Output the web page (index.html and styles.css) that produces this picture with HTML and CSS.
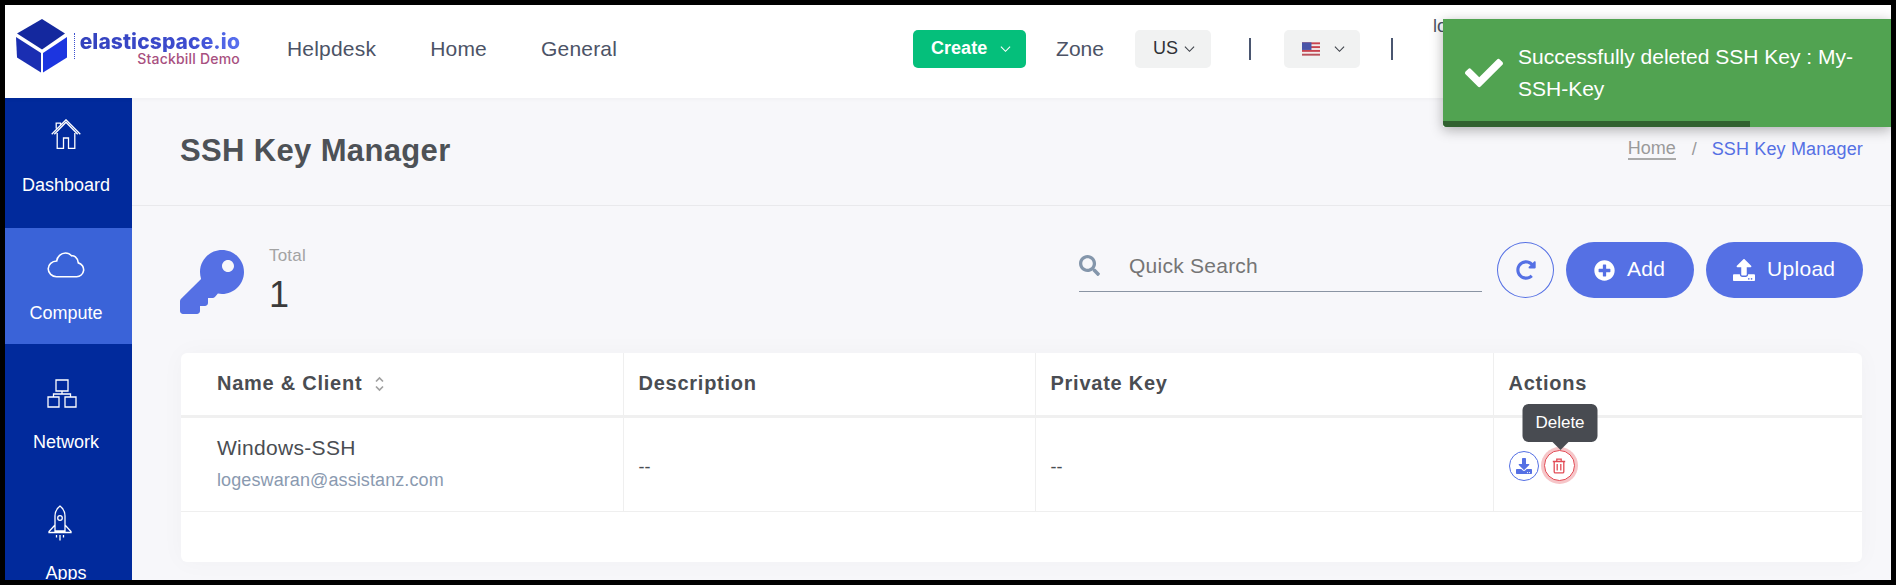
FILE: index.html
```html
<!DOCTYPE html>
<html lang="en">
<head>
<meta charset="utf-8">
<title>SSH Key Manager</title>
<link rel="stylesheet" href="styles.css">
</head>
<body>
<div class="frame">
  <header class="topbar">
    <a class="logo">
      <svg class="logo-cube" viewBox="0 0 52 54" aria-hidden="true">
        <polygon points="26,0 49,14.500 26,30.500 1,14.500" fill="#14289e"/>
        <polygon points="0,18 25,34 25,53.500 1,38.500" fill="#1a2eb2"/>
        <polygon points="27,34 51,18 51,38.500 27,53.500" fill="#1c35e0"/>
      </svg>
      <span class="logo-rule"></span>
      <span class="logo-text">
        <span class="logo-name">elasticspace.io</span>
        <span class="logo-sub">Stackbill Demo</span>
      </span>
    </a>
    <nav class="topnav">
      <a>Helpdesk</a>
      <a>Home</a>
      <a>General</a>
    </nav>
    <div class="topright">
      <button class="create">Create
        <svg class="chev chev-w" viewBox="0 0 12 8"><polyline points="1,1.500 6,6.500 11,1.500"/></svg>
      </button>
      <span class="zone">Zone</span>
      <div class="pick pick-us">US
        <svg class="chev" viewBox="0 0 12 8"><polyline points="1,1.500 6,6.500 11,1.500"/></svg>
      </div>
      <span class="vr vr-a"></span>
      <div class="pick pick-flag">
        <svg class="flag" viewBox="0 0 19 14" aria-hidden="true">
          <rect width="19" height="14" fill="#f3eaea"/>
          <rect y="0" width="19" height="2" fill="#c8434f"/>
          <rect y="4" width="19" height="2" fill="#c8434f"/>
          <rect y="8" width="19" height="2" fill="#c8434f"/>
          <rect y="12" width="19" height="2" fill="#b8535c"/>
          <rect width="10" height="8" fill="#4a55a8"/>
        </svg>
        <svg class="chev" viewBox="0 0 12 8"><polyline points="1,1.500 6,6.500 11,1.500"/></svg>
      </div>
      <span class="vr vr-b"></span>
      <span class="user">logeswaran@assistanz.com</span>
    </div>
  </header>

  <div class="body">
    <aside class="side">
      <a class="side-item item-dash">
        <svg class="ico-home" viewBox="0 0 30 30" aria-hidden="true">
          <path d="M.7 15.300 15 .8l14.300 14.500M3.300 15.200 15 3.300l11.700 11.900M6.200 14v15.300h6.300V19h5v10.300h6.300V14M5.200 9.500V4.200h4.300v1.300"/>
        </svg>
        <span>Dashboard</span>
      </a>
      <a class="side-item item-comp active">
        <svg class="ico-cloud" viewBox="0 0 38 26" aria-hidden="true">
          <path d="M9.500 24.700h20a7 7 0 0 0 1.800-13.800C30.600 5 26.500 3.300 24.500 3.800 22.800 1.800 20.500 1 18.500 1 14 1 10.200 4.500 9.700 9 5 9.200 1.200 12.300 1.200 16.800c0 4.400 3.800 7.900 8.300 7.900z"/>
        </svg>
        <span>Compute</span>
      </a>
      <a class="side-item item-net">
        <svg class="ico-net" viewBox="0 0 30 29" aria-hidden="true">
          <path d="M9 1h12v11H9zM1 18h11v10H1zM18 18h11v10H18zM15 12v3M6.500 18v-3h17v3"/>
        </svg>
        <span>Network</span>
      </a>
      <a class="side-item item-apps">
        <svg class="ico-rocket" viewBox="0 0 24 36" aria-hidden="true">
          <path d="M12 1c-3.800 3-5 6.500-5 10v15h10V11c0-3.500-1.200-7-5-10zM7 20l-6 6.500v1h22v-1L17 20"/>
          <circle cx="12" cy="13" r="2.300"/>
          <path d="M8.500 30v2.500M12 30v5.500M15.500 30v2.500"/>
        </svg>
        <span>Apps</span>
      </a>
    </aside>

    <main class="main">
      <div class="pagehead">
        <h1>SSH Key Manager</h1>
        <div class="crumbs">
          <a class="crumb-home">Home</a>
          <span class="crumb-sep">/</span>
          <span class="crumb-now">SSH Key Manager</span>
        </div>
      </div>

      <div class="content">
        <div class="toolbar">
          <svg class="bigkey" viewBox="0 0 512 512" aria-hidden="true">
            <path d="M512 176.001C512 273.203 433.202 352 336 352c-11.220 0-22.190-1.062-32.827-3.069l-24.012 27.014A23.999 23.999 0 0 1 261.223 384H224v40c0 13.255-10.745 24-24 24h-40v40c0 13.255-10.745 24-24 24H24c-13.255 0-24-10.745-24-24v-78.059c0-6.365 2.529-12.470 7.029-16.971l161.802-161.802C163.108 213.814 160 195.271 160 176 160 78.798 238.797.001 335.999 0 433.488-.001 512 78.511 512 176.001zM336 128c0 26.510 21.490 48 48 48s48-21.490 48-48-21.490-48-48-48-48 21.490-48 48z"/>
          </svg>
          <div class="stat">
            <div class="stat-label">Total</div>
            <div class="stat-value">1</div>
          </div>
          <label class="search">
            <svg class="search-ico" viewBox="0 0 512 512" aria-hidden="true">
              <path d="M505 442.700L405.300 343c-4.500-4.500-10.600-7-17-7H372c27.600-35.300 44-79.700 44-128C416 93.100 322.900 0 208 0S0 93.100 0 208s93.100 208 208 208c48.300 0 92.700-16.400 128-44v16.300c0 6.400 2.500 12.500 7 17l99.700 99.700c9.400 9.400 24.600 9.400 33.900 0l28.300-28.300c9.400-9.400 9.400-24.600.1-34zM208 336c-70.700 0-128-57.200-128-128 0-70.700 57.200-128 128-128 70.700 0 128 57.200 128 128 0 70.700-57.200 128-128 128z"/>
            </svg>
            <input class="search-input" type="text" placeholder="Quick Search">
          </label>
          <button class="refresh" aria-label="Refresh">
            <svg viewBox="0 0 512 512" aria-hidden="true">
              <path d="M256.455 8c66.269.119 126.437 26.233 170.859 68.685l35.715-35.715C478.149 25.851 504 36.559 504 57.941V192c0 13.255-10.745 24-24 24H345.941c-21.382 0-32.090-25.851-16.971-40.971l41.750-41.750c-30.864-28.899-70.801-44.907-113.230-45.273-92.398-.798-170.283 73.977-169.484 169.442C88.764 348.009 162.184 424 256 424c41.127 0 79.997-14.678 110.629-41.556 4.743-4.161 11.906-3.908 16.368.553l39.662 39.662c4.872 4.872 4.631 12.815-.482 17.433C378.202 479.813 319.926 504 256 504 119.034 504 8.001 392.967 8 256.002 7.999 119.193 119.646 7.755 256.455 8z"/>
            </svg>
          </button>
          <button class="pill pill-add">
            <svg viewBox="0 0 512 512" aria-hidden="true">
              <path d="M256 8C119 8 8 119 8 256s111 248 248 248 248-111 248-248S393 8 256 8zm144 276c0 6.600-5.400 12-12 12h-92v92c0 6.600-5.400 12-12 12h-56c-6.600 0-12-5.400-12-12v-92h-92c-6.600 0-12-5.400-12-12v-56c0-6.600 5.400-12 12-12h92v-92c0-6.600 5.400-12 12-12h56c6.600 0 12 5.400 12 12v92h92c6.600 0 12 5.400 12 12v56z"/>
            </svg>
            <span class="pill-label">Add</span>
          </button>
          <button class="pill pill-up">
            <svg viewBox="0 0 512 512" aria-hidden="true">
              <path d="M296 384h-80c-13.300 0-24-10.700-24-24V192h-87.700c-17.800 0-26.700-21.500-14.100-34.100L242.300 5.700c7.500-7.500 19.800-7.500 27.300 0l152.200 152.200c12.600 12.600 3.700 34.100-14.100 34.100H320v168c0 13.300-10.700 24-24 24zm216-8v112c0 13.300-10.700 24-24 24H24c-13.300 0-24-10.700-24-24V376c0-13.300 10.700-24 24-24h136v8c0 30.900 25.100 56 56 56h80c30.900 0 56-25.100 56-56v-8h136c13.300 0 24 10.700 24 24zm-124 88c0-11-9-20-20-20s-20 9-20 20 9 20 20 20 20-9 20-20zm64 0c0-11-9-20-20-20s-20 9-20 20 9 20 20 20 20-9 20-20z"/>
            </svg>
            <span class="pill-label">Upload</span>
          </button>
        </div>

        <section class="card">
          <table class="grid">
            <colgroup>
              <col class="c1"><col class="c2"><col class="c3"><col class="c4">
            </colgroup>
            <thead>
              <tr>
                <th class="first">Name &amp; Client
                  <svg class="sort" viewBox="0 0 9 16" aria-hidden="true"><path d="M1 5.500 4.500 2 8 5.500M1 10.500 4.500 14 8 10.500"/></svg>
                </th>
                <th>Description</th>
                <th>Private Key</th>
                <th>Actions</th>
              </tr>
            </thead>
            <tbody>
              <tr>
                <td class="first">
                  <div class="kname">Windows-SSH</div>
                  <div class="kmail">logeswaran@assistanz.com</div>
                </td>
                <td class="dash">--</td>
                <td class="dash">--</td>
                <td>
                  <div class="acts">
                    <button class="act act-dl" aria-label="Download">
                      <svg viewBox="0 0 512 512" aria-hidden="true">
                        <path d="M216 0h80c13.300 0 24 10.700 24 24v168h87.700c17.800 0 26.700 21.500 14.100 34.100L269.700 378.300c-7.500 7.500-19.800 7.500-27.300 0L90.100 226.100c-12.600-12.600-3.700-34.100 14.100-34.100H192V24c0-13.300 10.700-24 24-24zm296 376v112c0 13.300-10.700 24-24 24H24c-13.300 0-24-10.700-24-24V376c0-13.300 10.700-24 24-24h146.700l49 49c20.100 20.100 52.500 20.100 72.600 0l49-49H488c13.300 0 24 10.700 24 24zm-124 88c0-11-9-20-20-20s-20 9-20 20 9 20 20 20 20-9 20-20zm64 0c0-11-9-20-20-20s-20 9-20 20 9 20 20 20 20-9 20-20z"/>
                      </svg>
                    </button>
                    <button class="act act-del" aria-label="Delete">
                      <svg viewBox="0 0 14 16" aria-hidden="true">
                        <path d="M.8 3.500h12.400M4.800 3.500V1.200h4.400v2.300M2.200 3.500v10.200c0 .7.500 1.200 1.200 1.200h7.200c.7 0 1.200-.5 1.200-1.200V3.500M5.200 6v6.500M8.800 6v6.500"/>
                      </svg>
                      <span class="tip">Delete</span>
                    </button>
                  </div>
                </td>
              </tr>
            </tbody>
          </table>
        </section>
      </div>
    </main>
  </div>

  <div class="toast">
    <div class="toast-body">
      <svg class="toast-ico" viewBox="0 0 512 512" aria-hidden="true">
        <path d="M173.898 439.404l-166.400-166.400c-9.997-9.997-9.997-26.206 0-36.204l36.203-36.204c9.997-9.998 26.207-9.998 36.204 0L192 312.690 432.095 72.596c9.997-9.997 26.207-9.997 36.204 0l36.203 36.204c9.997 9.997 9.997 26.206 0 36.204l-294.400 294.401c-9.998 9.997-26.207 9.997-36.204-.001z"/>
      </svg>
      <p class="toast-text">Successfully deleted SSH Key : My-SSH-Key</p>
    </div>
    <div class="toast-bar"></div>
  </div>
</div>
</body>
</html>
```

FILE: styles.css
```css
* { box-sizing: border-box; }
html, body { margin: 0; height: 100%; overflow: hidden; }
body {
  background: #000;
  padding: 5px;
  font-family: "Liberation Sans", Arial, sans-serif;
  color: #4a4d52;
}
button { font-family: inherit; border: 0; padding: 0; cursor: pointer; }
a { color: inherit; text-decoration: none; }

.frame {
  position: relative;
  width: 1886px;
  height: 575px;
  overflow: hidden;
  background: #f7f7fa;
  display: flex;
  flex-direction: column;
}

/* top bar */
.topbar {
  flex: 0 0 93px;
  display: flex;
  align-items: center;
  background: #fff;
  padding-bottom: 6px;
  white-space: nowrap;
  box-shadow: 0 1px 4px rgba(0, 0, 0, .04);
  position: relative;
  z-index: 1;
}
.logo {
  flex: 0 0 127px;
  width: 127px;
  display: flex;
  align-items: center;
  padding: 0 0 6px 11px;
}
.logo-cube { flex: none; width: 52px; height: 54px; }
.logo-rule {
  flex: none;
  height: 26px;
  margin: 0 7px 0 6px;
  border-left: 1.500px dotted #3a4fd0;
}
.logo-text {
  flex: none;
  display: flex;
  flex-direction: column;
  align-items: flex-end;
  width: 158px;
  margin-top: 7px;
}
.logo-name {
  font-family: Inter, sans-serif;
  font-weight: 800;
  font-size: 21px;
  line-height: 20px;
  letter-spacing: .1px;
  color: #3a48c6;
  background: linear-gradient(90deg, #3442bd, #3d4cd0 70%, #5a72f0);
  -webkit-background-clip: text;
  background-clip: text;
  -webkit-text-fill-color: transparent;
}
.logo-sub {
  font-family: Inter, sans-serif;
  font-weight: 500;
  font-size: 14px;
  line-height: 14px;
  letter-spacing: .2px;
  color: #a8507f;
}
.topnav {
  display: flex;
  gap: 54px;
  margin-left: 155px;
  font-size: 21px;
  letter-spacing: .2px;
  color: #4c5366;
}
.topright {
  display: flex;
  align-items: center;
  margin-left: 296px;
}
.create {
  display: flex;
  align-items: center;
  gap: 13px;
  width: 113px;
  height: 38px;
  padding-left: 18px;
  border-radius: 5px;
  background: #05bf7b;
  color: #fff;
  font-size: 18px;
  font-weight: 700;
}
.chev { width: 11px; height: 8px; fill: none; stroke: #3c4048; stroke-width: 1.200; }
.chev-w { stroke: #fff; }
.zone { margin-left: 30px; font-size: 21px; color: #4c5366; }
.pick {
  display: flex;
  align-items: center;
  height: 38px;
  width: 76px;
  border-radius: 5px;
  background: #f1f2f2;
  color: #2f3136;
  font-size: 18px;
}
.pick-us { margin-left: 31px; padding-left: 18px; gap: 6px; }
.pick-flag { margin-left: 33px; padding-left: 18px; gap: 14px; }
.flag { width: 18px; height: 14px; }
.vr { width: 2px; height: 22px; background: #4a5670; }
.vr-a { margin-left: 38px; }
.vr-b { margin-left: 31px; }
.user {
  align-self: flex-start;
  margin: -14px 0 0 40px;
  font-size: 18px;
  line-height: 20px;
  color: #4c5366;
}

/* layout */
.body { flex: 1; display: flex; min-height: 0; }

/* sidebar */
.side {
  flex: 0 0 127px;
  background: #012a9c;
  color: #fff;
  overflow: hidden;
  font-size: 18px;
}
.side-item {
  display: flex;
  flex-direction: column;
  align-items: center;
  line-height: 22px;
  padding-right: 5px;
}
.side-item svg { fill: none; stroke: #fff; stroke-width: 1.300; display: block; }
.item-dash { height: 130px; padding-top: 21px; }
.item-comp { height: 116px; padding-top: 24px; }
.item-net { height: 130px; padding-top: 35px; }
.item-apps { padding-top: 31px; }
.side-item.active { background: #3a63d8; }
.ico-home { width: 30px; height: 30px; margin: 0 1px 25px 0; }
.ico-cloud { width: 38px; height: 26px; margin-bottom: 24px; stroke-width: 1.600 !important; }
.ico-net { width: 30px; height: 29px; margin: 0 8px 23px 0; }
.ico-rocket { width: 24px; height: 36px; margin: 0 12px 21px 0; }

/* main */
.main { flex: 1; min-width: 0; padding-right: 28px; display: flex; flex-direction: column; }
.pagehead {
  flex: 0 0 108px;
  display: flex;
  align-items: center;
  justify-content: space-between;
  margin-right: -28px;
  padding: 0 28px 2px 48px;
  border-bottom: 1.500px solid #e9e9ec;
}
.pagehead h1 { margin: 0; font-size: 31px; font-weight: 700; letter-spacing: .35px; color: #4d5156; }
.crumbs { display: flex; align-items: center; font-size: 18px; margin-bottom: 3px; }
.crumb-home { color: #9a9a9a; border-bottom: 2px solid #aaa; line-height: 20px; }
.crumb-sep { margin: 0 15px 0 16px; color: #9a9a9a; }
.crumb-now { color: #5570e4; letter-spacing: .15px; }

.content { padding-left: 49px; }
.toolbar { display: flex; align-items: flex-start; padding-top: 36px; height: 147px; }
.bigkey { flex: none; width: 64px; height: 64px; margin: 8px 25px 0 -1px; fill: #5570e4; }
.stat-label { margin-top: 4px; font-size: 17px; letter-spacing: .2px; line-height: 20px; color: #a3a3a3; }
.stat-value { margin-top: 7px; font-size: 36px; line-height: 44px; color: #3a3a3a; }
.search {
  display: flex;
  align-items: center;
  width: 403px;
  height: 50px;
  margin-left: auto;
  padding-bottom: 2px;
  border-bottom: 1.500px solid #8a94a3;
}
.search-ico { flex: none; width: 21px; height: 21px; fill: #8496ab; margin-right: 29px; }
.search-input {
  flex: 1;
  min-width: 0;
  border: 0;
  outline: 0;
  background: transparent;
  padding: 0;
  font: 21px "Liberation Sans", Arial, sans-serif;
  letter-spacing: .25px;
  color: #555;
}
.search-input::placeholder { color: #757575; opacity: 1; }
.refresh {
  flex: none;
  display: flex;
  align-items: center;
  justify-content: center;
  width: 57px;
  height: 56px;
  margin-left: 15px;
  border: 1px solid #5570e4;
  border-radius: 50%;
  background: transparent;
}
.refresh svg { width: 20px; height: 20px; fill: #5570e4; }
.pill {
  flex: none;
  display: flex;
  align-items: center;
  height: 56px;
  margin-left: 12px;
  border-radius: 28px;
  background: #5570e4;
  color: #fff;
  font-size: 21px;
}
.pill svg { fill: #fff; }
.pill-label { letter-spacing: .3px; margin-bottom: 2px; }
.pill-add { width: 128px; padding-left: 28px; gap: 12px; }
.pill-add svg { width: 21px; height: 21px; }
.pill-up { width: 157px; padding-left: 27px; gap: 12px; }
.pill-up svg { width: 22px; height: 22px; }

/* table card */
.card {
  height: 209px;
  margin-right: 1px;
  background: #fff;
  border-radius: 6px;
  box-shadow: 0 0 24px rgba(0, 0, 0, .03);
}
.grid { width: 100%; border-collapse: collapse; table-layout: fixed; }
.c1 { width: 442px; }
.c2 { width: 412px; }
.c3 { width: 458px; }
.grid th, .grid td { padding: 0 0 0 15px; text-align: left; border-left: 1px solid #efefef; }
.grid .first { padding-left: 36px; border-left: 0; }
.grid th {
  height: 63px;
  padding-bottom: 1px;
  border-bottom: 3px solid #f0f0f0;
  font-size: 20px;
  font-weight: 700;
  letter-spacing: .75px;
  color: #4a4d52;
}
.grid td { height: 95px; border-bottom: 1px solid #efefef; font-size: 18px; color: #4a4d52; }
.grid td.dash { padding-top: 6px; }
.sort { width: 9px; height: 16px; margin-left: 6px; vertical-align: -2px; fill: none; stroke: #a0a0a0; stroke-width: 1.700; }
.kname { font-size: 21px; line-height: 30px; letter-spacing: .3px; color: #4a4d52; margin-top: -4px; }
.kmail { margin-top: 5px; font-size: 18px; line-height: 24px; letter-spacing: .1px; color: #8a9ab0; }
.acts { display: flex; align-items: center; gap: 5px; padding-top: 3px; }
.act {
  position: relative;
  display: flex;
  align-items: center;
  justify-content: center;
  border-radius: 50%;
  background: #fff;
}
.act-dl { width: 30px; height: 30px; border: 1px solid #5570e4; }
.act-dl svg { width: 16px; height: 16px; fill: #5570e4; }
.act-del {
  width: 31px;
  height: 31px;
  border: 1.500px solid #e24b55;
  box-shadow: 0 0 0 3px rgba(226, 75, 85, .32);
}
.act-del svg { width: 14px; height: 16px; fill: none; stroke: #e24b55; stroke-width: 1.300; }
.tip {
  position: absolute;
  left: 50%;
  bottom: 38px;
  transform: translateX(-50%);
  margin-left: 1px;
  width: 75px;
  height: 38px;
  border-radius: 6px;
  background: #484b51;
  color: #fff;
  font-size: 17px;
  line-height: 38px;
  text-align: center;
}
.tip::after {
  content: "";
  position: absolute;
  left: 50%;
  top: 100%;
  margin-left: -8px;
  border: 8px solid transparent;
  border-bottom: 0;
  border-top-color: #484b51;
}

/* toast */
.toast {
  position: absolute;
  top: 14px;
  right: 0;
  width: 448px;
  height: 108px;
  display: flex;
  flex-direction: column;
  background: #51a351;
  border-radius: 0 0 0 4px;
  overflow: hidden;
  z-index: 5;
}
.frame::after {
  content: "";
  position: absolute;
  top: 14px;
  right: 0;
  width: 448px;
  height: 108px;
  box-shadow: 0 3px 12px rgba(0, 0, 0, .3);
  z-index: 4;
}
.toast-body { flex: 1; display: flex; align-items: center; padding: 6px 0 0 22px; }
.toast-ico { flex: none; width: 38px; height: 38px; fill: #fff; margin-right: 15px; }
.toast-text {
  margin: 0;
  width: 350px;
  font-size: 21px;
  line-height: 32px;
  color: #fff;
}
.toast-bar { flex: 0 0 6px; width: 307px; background: #316130; }
```
